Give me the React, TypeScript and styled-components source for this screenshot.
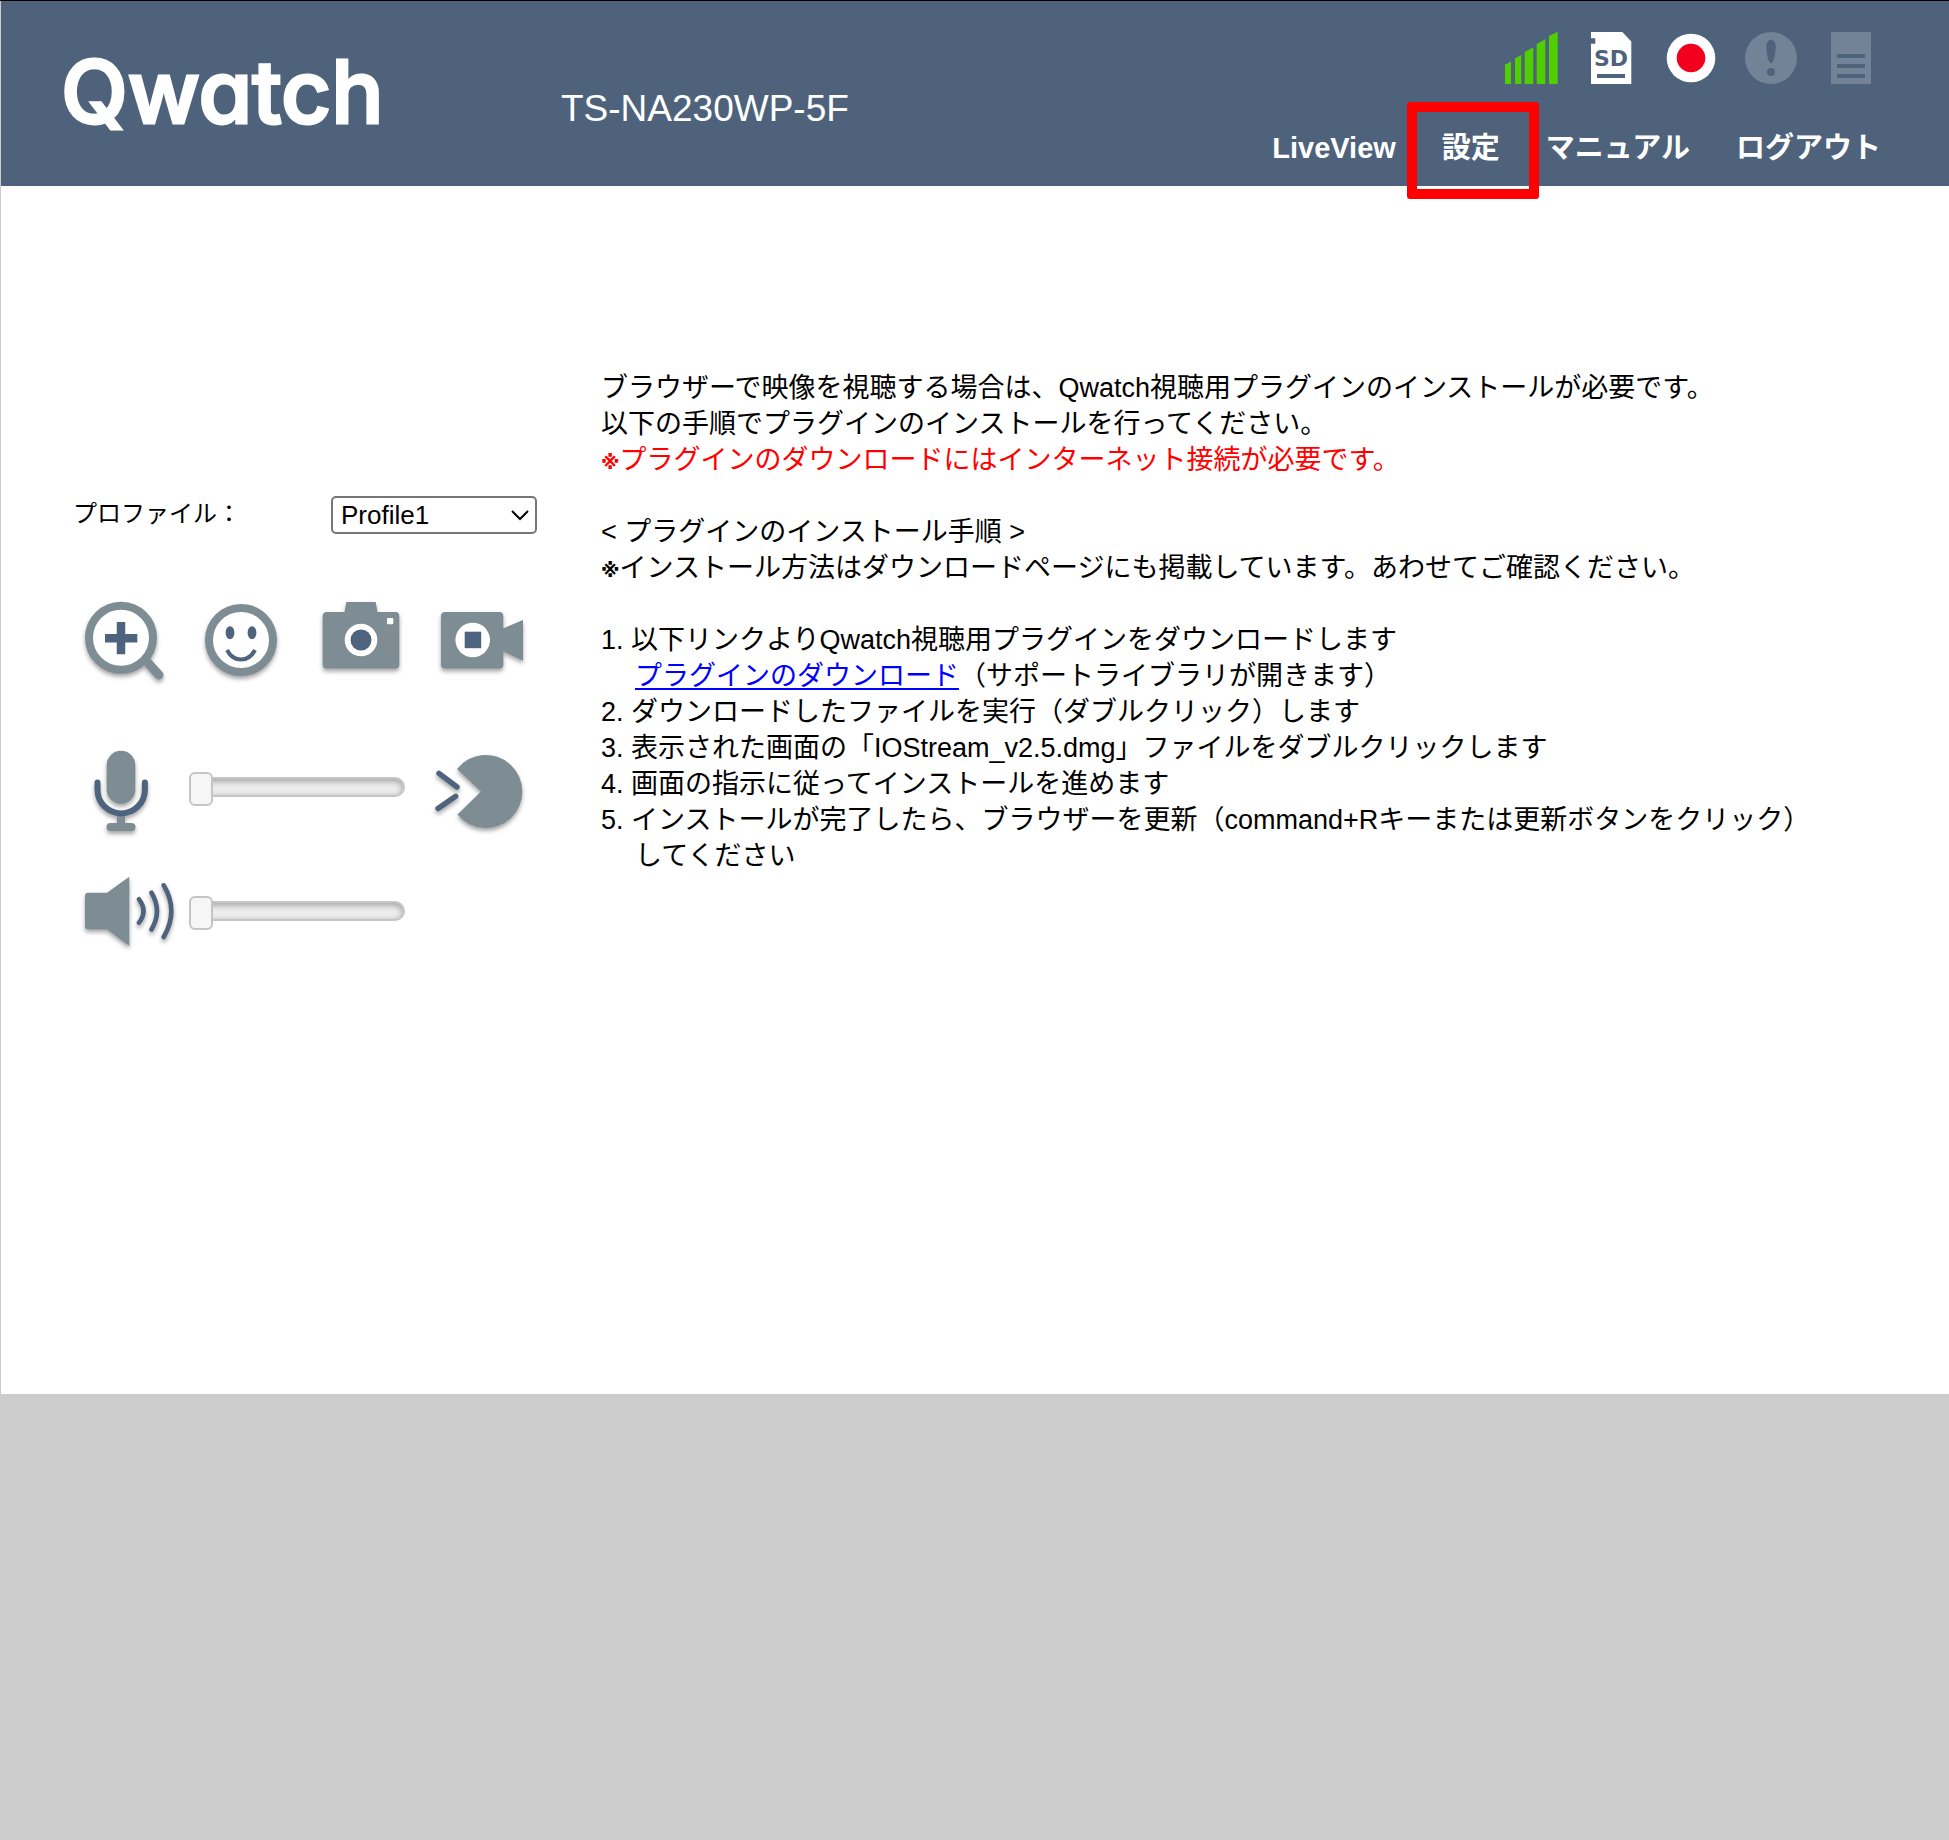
import React, { useState } from "react";
import styled, { createGlobalStyle } from "styled-components";

const color = {
  header: "#4e637b",
  faded: "#728297",
  icon: "#7e8c93",
  accent: "#4e637d",
  page: "#cccccc",
};

const GlobalStyle = createGlobalStyle`
  *, *::before, *::after { box-sizing: border-box; }
  body {
    margin: 0;
    background: ${color.page};
    color: #000;
    font-family: "Liberation Sans", "Noto Sans CJK JP", sans-serif;
    font-size: 27px;
    line-height: 36px;
  }
`;

const Page = styled.div`
  border-top: 1px solid #000;
  padding-left: 1px;
`;

const Header = styled.header`
  display: grid;
  grid-template-columns: 500px 1fr auto;
  height: 185px;
  padding: 0 68px 0 60px;
  background: ${color.header};
  color: #fff;
`;

const Logo = styled.div`
  padding-top: 46px;
  font-family: Inter, "Liberation Sans", sans-serif;
  font-size: 87px;
  font-weight: 500;
  font-optical-sizing: none;
  line-height: 90px;
  font-feature-settings: "cv11" 1;
  -webkit-text-stroke: 3px #fff;
  stroke-linejoin: round;
`;

const Model = styled.div`
  padding-top: 87px;
  font-size: 37px;
  line-height: 42px;
`;

const HeaderTools = styled.div`
  display: flex;
  flex-direction: column;
  align-items: flex-end;
  gap: 42px;
  padding-top: 27px;
`;

const StatusList = styled.div`
  display: flex;
  gap: 20px;
`;

const StatusIcon = styled.svg`
  display: block;
  width: 60px;
  height: 60px;
`;

const SdLabel = styled.text`
  font-family: "DejaVu Sans", sans-serif;
  font-size: 22px;
  font-weight: 700;
`;

const Nav = styled.nav`
  display: flex;
  gap: 46px;
`;

const NavLink = styled.a`
  position: relative;
  color: #fff;
  font-size: 29px;
  font-weight: 700;
  text-decoration: none;
  white-space: nowrap;
`;

const Highlight = styled.span`
  position: absolute;
  top: -28px;
  left: -35px;
  width: 132px;
  height: 97px;
  border: 10px solid #f00;
  border-radius: 3px;
  pointer-events: none;
`;

const Main = styled.main`
  display: flex;
  align-items: flex-start;
  gap: 64px;
  padding: 184px 72px 433px;
  background: #fff;
`;

const Controls = styled.section`
  flex: none;
  width: 464px;
  padding-top: 126px;
`;

const ProfileRow = styled.div`
  display: flex;
  align-items: flex-start;
  justify-content: space-between;
  height: 38px;
  margin-bottom: 60px;
`;

const ProfileLabel = styled.label`
  font-size: 24px;
  line-height: 36px;
`;

const SelectBox = styled.div`
  position: relative;
  width: 206px;
`;

const Select = styled.select`
  display: block;
  width: 100%;
  height: 38px;
  padding: 0 8px;
  appearance: none;
  background: #fff;
  border: 2px solid #767676;
  border-radius: 5px;
  color: #000;
  font: inherit;
  font-size: 26px;
  line-height: 34px;
`;

const Chevron = styled.svg`
  position: absolute;
  top: 13px;
  right: 8px;
  width: 18px;
  height: 12px;
  pointer-events: none;
`;

const ButtonRow = styled.div`
  display: flex;
  gap: 24px;
  margin-bottom: 51px;
`;

const IconButton = styled.button`
  padding: 0;
  border: 0;
  background: none;
  cursor: pointer;
`;

const ControlIcon = styled.svg<{ $wide?: boolean }>`
  display: block;
  width: ${(p) => (p.$wide ? 108 : 96)}px;
  height: 96px;
  filter: drop-shadow(0 3px 2px rgba(0, 0, 0, 0.35));
`;

const VolumeRow = styled.div`
  display: grid;
  grid-template-columns: 108px 216px 96px;
  align-items: center;
  column-gap: 8px;
  margin-bottom: 28px;

  &:last-child { margin-bottom: 0; }
  & > :nth-child(3) { margin-left: 20px; }
`;

const Slider = styled.input`
  appearance: none;
  width: 100%;
  height: 34px;
  margin: 0 0 4px;
  background: none;

  &::-webkit-slider-runnable-track {
    height: 20px;
    border: 2px solid #c5c5c5;
    border-radius: 10px;
    background: #ededed;
    box-shadow: inset 0 2px 6px rgba(0, 0, 0, 0.35);
  }
  &::-webkit-slider-thumb {
    appearance: none;
    width: 24px;
    height: 34px;
    margin: -7px 0 0 -2px;
    border: 2px solid #c5c5c5;
    border-radius: 6px;
    background: #f6f6f6;
  }
`;

const Guide = styled.section`
  flex: 1;
  min-width: 0;
`;

const Para = styled.p<{ $alert?: boolean }>`
  margin: 0;
  color: ${(p) => (p.$alert ? "#f00" : "inherit")};
`;

const Block = styled.div`
  margin-bottom: 36px;
`;

const Mark = styled.span`
  font-family: "DejaVu Sans", sans-serif;
  font-size: 19px;
  font-weight: 700;
  line-height: 1;
`;

const Steps = styled.ol`
  margin: 0;
  padding: 0;
  list-style: none;
`;

const Step = styled.li`
  padding-left: 34px;
  text-indent: -34px;
`;

const DownloadLink = styled.a`
  color: #00f;
  text-decoration: underline;
  text-decoration-thickness: 2px;
  text-underline-offset: 3px;
`;

const ContinuedLine = styled.div`
  text-indent: 0;
`;

function StatusIcons() {
  return (
    <StatusList>
      <StatusIcon viewBox="0 0 60 60" role="img" aria-label="signal" fill="#4fce00">
        <path d="M4 36.7 10 33.4V56H4zM14 30.3 20.3 27V56H14zM23.7 24 32.3 19.3V56H23.7zM35.7 16 44.3 11.3V56H35.7zM48 8 56.7 3.7V56H48z" />
      </StatusIcon>
      <StatusIcon viewBox="0 0 60 60" role="img" aria-label="SD">
        <path fill="#fff" d="M10 4H41.3L50.3 13.5V56H10V15.7H14.3V10.3H10z" />
        <SdLabel x="30" y="38" textAnchor="middle" fill={color.header}>SD</SdLabel>
        <path fill={color.header} d="M16 46H44V50H16z" />
      </StatusIcon>
      <StatusIcon viewBox="0 0 60 60" role="img" aria-label="recording">
        <circle cx="30" cy="30" r="24.3" fill="#fff" />
        <circle cx="30" cy="30" r="14.3" fill="#f2001d" />
      </StatusIcon>
      <StatusIcon viewBox="0 0 60 60" role="img" aria-label="alert">
        <circle cx="30" cy="30" r="26" fill={color.faded} />
        <path fill={color.header} d="M30 11.7C33 11.7 34.7 15 34.7 19C34.7 25 32.5 35.3 30 35.3S25.3 25 25.3 19C25.3 15 27 11.7 30 11.7z" />
        <circle cx="30" cy="44" r="4" fill={color.header} />
      </StatusIcon>
      <StatusIcon viewBox="0 0 60 60" role="img" aria-label="log">
        <path fill={color.faded} d="M10 4H50V56H10z" />
        <path fill={color.header} d="M16 26H44V30H16zM16 36H44V40H16zM16 46H44V50H16z" />
      </StatusIcon>
    </StatusList>
  );
}

function ZoomIcon() {
  return (
    <ControlIcon viewBox="0 0 96 96" aria-hidden="true">
      <circle cx="48" cy="43.7" r="32" fill="#fff" stroke={color.icon} strokeWidth="8" />
      <path d="M72.5 66 86 81" stroke={color.icon} strokeWidth="9" strokeLinecap="round" />
      <path d="M32 44.3H64.3M48 28V60.3" stroke={color.accent} strokeWidth="8.5" />
    </ControlIcon>
  );
}

function FaceIcon() {
  return (
    <ControlIcon viewBox="0 0 96 96" aria-hidden="true">
      <circle cx="48" cy="46" r="32" fill="#fff" stroke={color.icon} strokeWidth="8" />
      <ellipse cx="37" cy="38.7" rx="4.4" ry="6.5" fill={color.accent} />
      <ellipse cx="59" cy="38.7" rx="4.4" ry="6.5" fill={color.accent} />
      <path d="M34 56Q39 65.5 48 65.5T62 56" fill="none" stroke={color.accent} strokeWidth="4" />
    </ControlIcon>
  );
}

function CameraIcon() {
  return (
    <ControlIcon viewBox="0 0 96 96" aria-hidden="true">
      <rect x="9.7" y="18" width="76.6" height="56.5" rx="4" fill={color.icon} />
      <path d="M31.5 18.5 33.3 8H62.7L64.5 18.5z" fill={color.icon} />
      <circle cx="48" cy="46" r="16.3" fill="#fff" />
      <circle cx="48" cy="46" r="10.5" fill={color.accent} />
      <rect x="74" y="24" width="6.3" height="6.3" rx="1" fill="#fff" />
    </ControlIcon>
  );
}

function VideoIcon() {
  return (
    <ControlIcon viewBox="0 0 96 96" aria-hidden="true">
      <rect x="8" y="18" width="62.3" height="56.5" rx="4" fill={color.icon} />
      <path d="M70 34.5 90 26V66.7L70 57z" fill={color.icon} />
      <circle cx="39.7" cy="46" r="17.3" fill="#fff" />
      <rect x="31.7" y="37.7" width="16.5" height="16.5" fill={color.accent} />
    </ControlIcon>
  );
}

function MicIcon() {
  return (
    <ControlIcon viewBox="0 0 108 96" $wide aria-hidden="true">
      <rect x="33.7" y="9.7" width="28.6" height="53" rx="14.3" fill={color.icon} />
      <path d="M44 72H52V82H58.5A4 4 0 0 1 58.5 90H37.5A4 4 0 0 1 37.5 82H44z" fill={color.icon} />
      <path d="M24.5 41.5V48.7A23.7 23.7 0 0 0 71.9 48.7V41.5" fill="none" stroke={color.accent} strokeWidth="6" strokeLinecap="round" />
    </ControlIcon>
  );
}

function SpeakerIcon() {
  return (
    <ControlIcon viewBox="0 0 108 96" $wide aria-hidden="true">
      <path d="M15 27.7H34L56.3 11.7V81L34 64.3H15Q12 64.3 12 61.3V30.7Q12 27.7 15 27.7z" fill={color.icon} />
      <path
        d="M66 34.3Q75 46 66 57.7M78.5 27.7Q89.5 46 78.5 64.5M90.7 20.3Q106 46 90.7 72"
        fill="none"
        stroke={color.accent}
        strokeWidth="4.6"
        strokeLinecap="round"
      />
    </ControlIcon>
  );
}

function TalkIcon() {
  return (
    <ControlIcon viewBox="0 0 96 96" aria-hidden="true">
      <path d="M48 50.5 24 28A36.5 36.5 0 1 1 24.5 73.5z" fill={color.icon} />
      <path d="M6 32.3 24 46M22.7 55.3 5 67.5" stroke={color.accent} strokeWidth="5.4" strokeLinecap="round" />
    </ControlIcon>
  );
}

export default function App() {
  const [mic, setMic] = useState(0);
  const [speaker, setSpeaker] = useState(0);

  return (
    <Page lang="ja">
      <GlobalStyle />
      <Header>
        <Logo>Qwatch</Logo>
        <Model>TS-NA230WP-5F</Model>
        <HeaderTools>
          <StatusIcons />
          <Nav>
            <NavLink href="#live">LiveView</NavLink>
            <NavLink href="#settings">
              設定
              <Highlight />
            </NavLink>
            <NavLink href="#manual">マニュアル</NavLink>
            <NavLink href="#logout">ログアウト</NavLink>
          </Nav>
        </HeaderTools>
      </Header>
      <Main>
        <Controls>
          <ProfileRow>
            <ProfileLabel htmlFor="profile">プロファイル：</ProfileLabel>
            <SelectBox>
              <Select id="profile" defaultValue="1">
                <option value="1">Profile1</option>
              </Select>
              <Chevron viewBox="0 0 18 12" aria-hidden="true">
                <path d="M1 2 9 10 17 2" fill="none" stroke="#000" strokeWidth="2" />
              </Chevron>
            </SelectBox>
          </ProfileRow>
          <ButtonRow>
            <IconButton aria-label="zoom"><ZoomIcon /></IconButton>
            <IconButton aria-label="face"><FaceIcon /></IconButton>
            <IconButton aria-label="snapshot"><CameraIcon /></IconButton>
            <IconButton aria-label="record"><VideoIcon /></IconButton>
          </ButtonRow>
          <VolumeRow>
            <IconButton aria-label="microphone"><MicIcon /></IconButton>
            <Slider
              type="range"
              aria-label="microphone volume"
              value={mic}
              onChange={(e) => setMic(Number(e.target.value))}
            />
            <IconButton aria-label="talk"><TalkIcon /></IconButton>
          </VolumeRow>
          <VolumeRow>
            <IconButton aria-label="speaker"><SpeakerIcon /></IconButton>
            <Slider
              type="range"
              aria-label="speaker volume"
              value={speaker}
              onChange={(e) => setSpeaker(Number(e.target.value))}
            />
          </VolumeRow>
        </Controls>
        <Guide>
          <Block>
            <Para>ブラウザーで映像を視聴する場合は、Qwatch視聴用プラグインのインストールが必要です。</Para>
            <Para>以下の手順でプラグインのインストールを行ってください。</Para>
            <Para $alert><Mark>※</Mark>プラグインのダウンロードにはインターネット接続が必要です。</Para>
          </Block>
          <Block>
            <Para>&lt; プラグインのインストール手順 &gt;</Para>
            <Para><Mark>※</Mark>インストール方法はダウンロードページにも掲載しています。あわせてご確認ください。</Para>
          </Block>
          <Steps>
            <Step>
              1. 以下リンクよりQwatch視聴用プラグインをダウンロードします
              <ContinuedLine>
                <DownloadLink href="#download">プラグインのダウンロード</DownloadLink>（サポートライブラリが開きます）
              </ContinuedLine>
            </Step>
            <Step>2. ダウンロードしたファイルを実行（ダブルクリック）します</Step>
            <Step>3. 表示された画面の「IOStream_v2.5.dmg」ファイルをダブルクリックします</Step>
            <Step>4. 画面の指示に従ってインストールを進めます</Step>
            <Step>
              5. インストールが完了したら、ブラウザーを更新（command+Rキーまたは更新ボタンをクリック）
              <ContinuedLine>してください</ContinuedLine>
            </Step>
          </Steps>
        </Guide>
      </Main>
    </Page>
  );
}
